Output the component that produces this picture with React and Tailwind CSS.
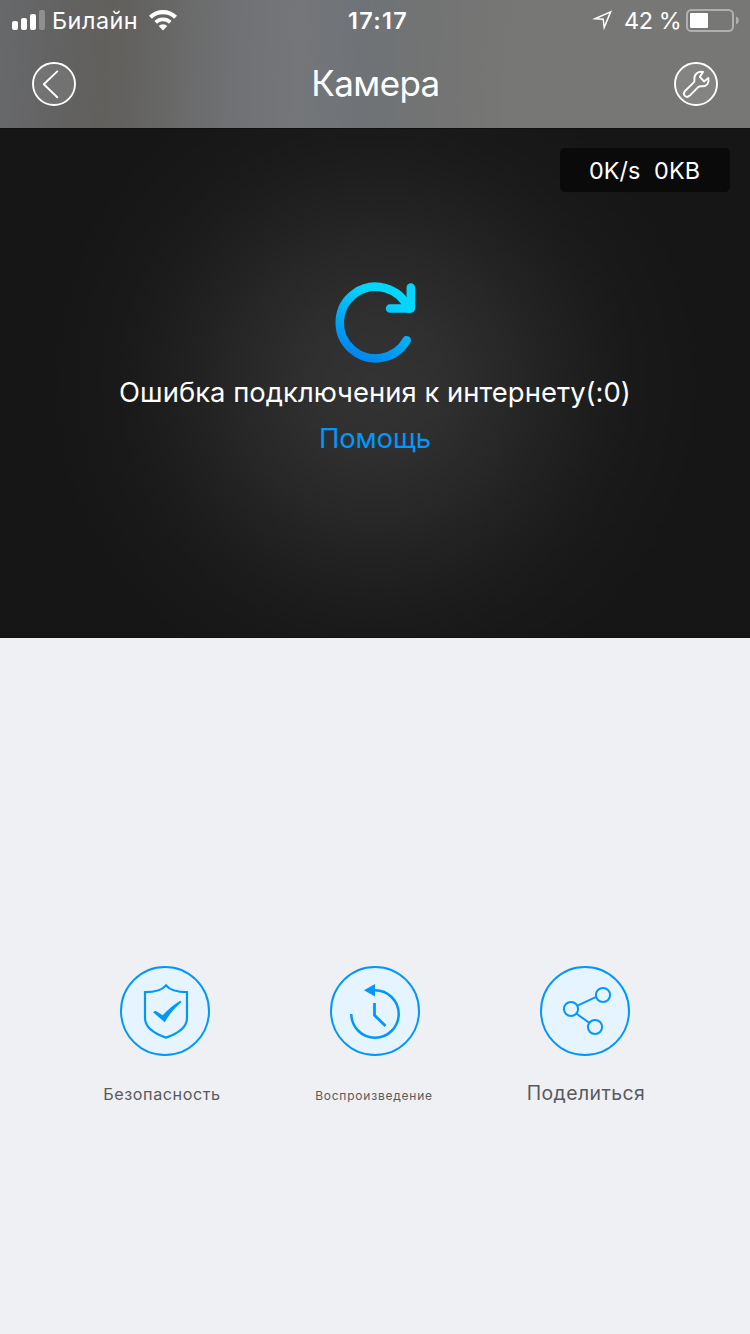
function Signal() {
  return (
    <svg className="h-[22px] w-[34px]" viewBox="0 0 34 22" fill="white">
      <rect x="0" y="12" width="6" height="9" rx="2" />
      <rect x="9" y="9" width="6" height="12" rx="2" />
      <rect x="18" y="5" width="6" height="16" rx="2" />
      <rect x="27" y="1" width="6" height="20" rx="2" opacity=".28" />
    </svg>
  );
}

function Wifi() {
  return (
    <svg className="h-[22px] w-[28px]" viewBox="0 0 28 22">
      <g fill="none" stroke="white" strokeWidth="4.2">
        <path d="M1.4 8.2a18.2 18.2 0 0 1 25.2 0" />
        <path d="M6.7 13.3a10.8 10.8 0 0 1 14.6 0" strokeWidth="3.8" />
      </g>
      <path d="M9.7 17.1a6.2 6.2 0 0 1 8.6 0L14 21.4Z" fill="white" />
    </svg>
  );
}

function Battery() {
  return (
    <svg className="h-[24px] w-[54px]" viewBox="0 0 54 24">
      <rect x="1" y="2" width="46" height="21" rx="4.5" fill="none" stroke="white" strokeOpacity=".42" strokeWidth="2" />
      <rect x="4" y="5" width="18" height="15" rx="1" fill="white" />
      <path d="M50 8.5v8c3.8-1.3 3.8-6.7 0-8Z" fill="white" opacity=".42" />
    </svg>
  );
}

function StatusBar() {
  return (
    <div className="flex h-10 items-center text-[23.4px] leading-10">
      <div className="flex w-[348px] items-center pl-3">
        <Signal />
        <span className="ml-[6px] w-[97px] whitespace-nowrap pt-0.5 font-[370] leading-[38px] tracking-[0.5px]">Билайн</span>
        <Wifi />
      </div>
      <span className="w-[244px] whitespace-nowrap pt-0.5 font-semibold leading-[38px] tracking-[1.3px]">17:17</span>
      <svg className="mt-0.5 h-[22px] w-[21px]" viewBox="0 0 21 22" fill="none" stroke="white" strokeWidth="1.5">
        <path d="M3 8.7 18.6 1.9 12.2 17.6 11.2 9.2Z" strokeLinejoin="miter" strokeMiterlimit="8" />
      </svg>
      <span className="ml-[11px] w-[62px] whitespace-nowrap pt-0.5 font-[370] leading-[38px] tracking-[-0.4px]">42 %</span>
      <Battery />
    </div>
  );
}

function Header() {
  return (
    <header className="h-32 bg-[linear-gradient(93deg,#68696b_0%,#626262_9%,#62605d_14%,#636260_18%,#686967_23%,#707174_31%,#747679_40%,#6f7377_48%,#727373_57%,#777775_68%,#777775_100%)] text-white">
      <StatusBar />
      <div className="flex h-[88px] items-center justify-between px-8">
        <button className="size-11" aria-label="Назад">
          <svg className="size-11" viewBox="0 0 44 44" fill="none" stroke="white" strokeWidth="1.9">
            <circle cx="22" cy="22" r="21" fill="white" fillOpacity=".1" />
            <path d="M25.3 9.4 11.8 22.3 25.3 35.3" strokeLinecap="round" strokeLinejoin="round" />
          </svg>
        </button>
        <h1 className="whitespace-nowrap pb-0.5 pl-px text-[35px] font-[375] leading-[86px] tracking-[-0.6px]">Камера</h1>
        <button className="size-11" aria-label="Настройки">
          <svg className="size-11" viewBox="0 0 44 44" fill="none" stroke="white" strokeWidth="1.9">
            <circle cx="22" cy="22" r="21" fill="white" fillOpacity=".1" />
            <path d="M29 9.9C24 9 20.3 12 20.4 16.5c.1 2 .4 2.7-.6 3.9l-9 8.9c-1.4 1.6-1 3.4.1 4.5s3.1 1.4 4.6 0l8.900-8.900c1.200-1 2.200-.6 4-.6 4.500 0 7.100-3.500 6-8.300l-4.400 3.400-4.200-4.500Z" strokeLinejoin="round" />
          </svg>
        </button>
      </div>
    </header>
  );
}

function RetryIcon() {
  return (
    <svg className="size-[90px]" viewBox="0 0 90 90" fill="none" stroke="url(#retry)" strokeWidth="8.5" strokeLinecap="round" strokeLinejoin="round">
      <defs>
        <linearGradient id="retry" gradientUnits="userSpaceOnUse" x1="32" y1="82" x2="60" y2="22">
          <stop offset="0" stopColor="#0284ee" />
          <stop offset="1" stopColor="#05d5fb" />
        </linearGradient>
      </defs>
      <path d="M76.7 62.2A35.8 35.8 0 1 1 78.5 30.6" />
      <path d="M80.8 9.4V30.5H60" />
    </svg>
  );
}

function Player() {
  return (
    <section className="flex h-[510px] flex-col border-y border-[#111113] bg-[#161616] bg-[radial-gradient(circle_at_50%_50%,#333333_0px,#303030_60px,#282828_130px,#1f1f1f_200px,#191919_260px,#161616_330px)] px-5 text-white">
      <div className="mt-[19px] flex h-11 w-[170px] items-center self-end rounded-[5px] bg-[#0a0a0a] pl-[29px] pt-0.5 text-[23.4px] font-[370]">
        <span className="w-[65px] whitespace-nowrap">0K/s</span>
        <span className="whitespace-nowrap tracking-[0.2px]">0KB</span>
      </div>
      <div className="mt-[86px] flex flex-col items-center font-[370]">
        <RetryIcon />
        <p className="mt-px whitespace-nowrap text-[27.4px] leading-[46px] tracking-[0.04px]">Ошибка подключения к интернету(:0)</p>
        <a className="whitespace-nowrap text-[27.4px] leading-[46px] tracking-[-0.1px] text-[#0397fb]">Помощь</a>
      </div>
    </section>
  );
}

function RoundIcon({ children }) {
  return (
    <svg className="size-[90px]" viewBox="0 0 90 90" fill="none" stroke="#0397fb" strokeWidth="2">
      <circle cx="45" cy="45" r="44" fill="#e6f4ff" />
      {children}
    </svg>
  );
}

function Actions() {
  return (
    <nav className="flex justify-center gap-[60px] pt-[328px] text-[#5a5a5c]">
      <button className="flex w-[150px] flex-col items-center">
        <RoundIcon>
          <path d="M46 19.4C42 24.5 35 26.2 25 26.2V52C25 62 34 67.5 46 71.6 58 67.5 67 62 67 52V26.2C57 26.2 50 24.5 46 19.4Z" strokeWidth="2.2" />
          <path d="M33 46.2 35.4 44.8 42.7 49.3C48 43.5 53 39 60.4 34.7L61.4 36.2C54 42.5 49.5 48 44.7 56.3Z" fill="#0397fb" stroke="none" />
        </RoundIcon>
        <span className="mt-[22px] whitespace-nowrap pr-[6px] text-[16.2px] leading-8 tracking-[0.55px]">Безопасность</span>
      </button>
      <button className="flex w-[150px] flex-col items-center">
        <RoundIcon>
          <path d="M45 24.3A23.7 23.7 0 1 1 21.3 48" strokeWidth="2.5" />
          <path d="M34 24.3 45 18V30.6Z" fill="#0397fb" stroke="none" />
          <path d="M44.5 37V49.3L55.5 60" strokeWidth="2.8" />
        </RoundIcon>
        <span className="mt-[24px] whitespace-nowrap pr-[2px] text-[12px] leading-8 tracking-[0.78px]">Воспроизведение</span>
      </button>
      <button className="flex w-[150px] flex-col items-center">
        <RoundIcon>
          <circle cx="31" cy="43" r="7.1" />
          <circle cx="63" cy="29" r="7.1" />
          <circle cx="55" cy="61" r="7.1" />
          <path d="M37.5 39.7 56.2 30.8M36.6 47.8 49.2 56.8" />
        </RoundIcon>
        <span className="mt-[21px] whitespace-nowrap pl-[2px] text-[19.4px] leading-8 tracking-[0.45px]">Поделиться</span>
      </button>
    </nav>
  );
}

export default function App() {
  return (
    <div className="h-[1334px] w-[750px] overflow-hidden bg-[#eef0f4] font-['Inter','Liberation_Sans',sans-serif]">
      <Header />
      <Player />
      <Actions />
    </div>
  );
}
